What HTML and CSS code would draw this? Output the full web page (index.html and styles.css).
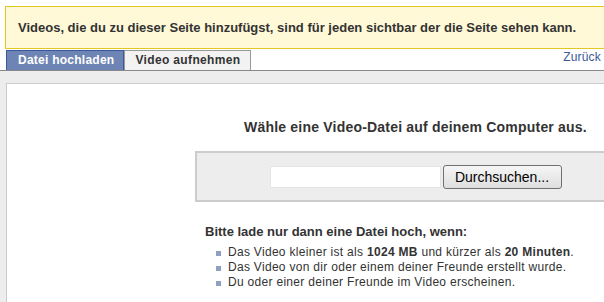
FILE: index.html
```html
<!DOCTYPE html>
<html lang="de">
<head>
  <meta charset="UTF-8" />
  <title>Video hinzufügen</title>
  <link rel="stylesheet" href="styles.css">
</head>
<body>
  <div class="notice">
    Videos, die du zu dieser Seite hinzufügst, sind für jeden sichtbar der die Seite sehen kann.
  </div>

  <div class="tabbar">
    <a class="tab active" href="#">Datei hochladen</a>
    <a class="tab" href="#">Video aufnehmen</a>
    <a class="back" href="#">Zurück</a>
  </div>

  <div class="panel">
    <div class="content">
      <div class="column">
        <h2>Wähle eine Video-Datei auf deinem Computer aus.</h2>

        <div class="upload">
          <input type="text" class="filename" />
          <button class="browse">Durchsuchen...</button>
        </div>

        <div class="rules">
          <h3>Bitte lade nur dann eine Datei hoch, wenn:</h3>
          <ul>
            <li>Das Video kleiner ist als <b>1024 MB</b> und kürzer als <b>20 Minuten</b>.</li>
            <li>Das Video von dir oder einem deiner Freunde erstellt wurde.</li>
            <li>Du oder einer deiner Freunde im Video erscheinen.</li>
          </ul>
        </div>
      </div>
    </div>
  </div>
</body>
</html>
```

FILE: styles.css
```css
* {
  margin: 0;
  padding: 0;
  box-sizing: border-box;
}

html, body {
  overflow: hidden;
  height: 100%;
}

body {
  background: #fff;
  color: #333;
  font-family: 'Liberation Sans', Arial, sans-serif;
  font-size: 12px;
  padding-top: 6px;
}

.notice {
  margin-left: 5px;
  height: 43px;
  padding: 0 12px;
  display: flex;
  align-items: center;
  background: #fff9d7;
  border: 1px solid #e2c822;
  border-right: none;
  font-weight: bold;
  font-size: 13px;
  color: #333;
  white-space: nowrap;
}

.tabbar {
  display: flex;
  align-items: flex-end;
  width: 595px;
  margin-left: 6px;
  height: 21px;
  padding-top: 1px;
}

.tab {
  display: block;
  height: 20px;
  line-height: 18px;
  padding: 0 10px;
  font-weight: bold;
  font-size: 12px;
  letter-spacing: 0.35px;
  text-decoration: none;
  color: #333;
  background: #f2f2f2;
  border: 1px solid #999;
  border-bottom: none;
}

.tab.active {
  background: #6d84b4;
  border-color: #3b5998;
  color: #fff;
  letter-spacing: 0.25px;
  padding: 0 9px 0 11px;
}

.back {
  margin-left: auto;
  align-self: flex-start;
  color: #3b5998;
  text-decoration: none;
  font-size: 12px;
  letter-spacing: 0.2px;
  line-height: 12px;
  margin-top: 1px;
}

.panel {
  border-top: 1px solid #898989;
  background: #ededed;
  padding: 12px 0 0 6px;
  height: 240px;
}

.content {
  background: #fff;
  border: 1px solid #ccc;
  border-right: none;
  border-bottom: none;
  height: 100%;
  overflow: hidden;
  padding: 35px 0 0 188px;
}

.column {
  width: 441px;
}

h2 {
  font-size: 14px;
  letter-spacing: 0.2px;
  font-weight: bold;
  line-height: 16px;
  text-align: center;
  color: #333;
  margin-bottom: 16px;
  white-space: nowrap;
}

.upload {
  background: #ededed;
  border: 2px solid #ccc;
  height: 51px;
  display: flex;
  align-items: center;
  justify-content: center;
  gap: 2px;
}

.filename {
  width: 171px;
  height: 22px;
  border: 1px solid #e4e4e4;
  background: #fff;
  margin-top: 1px;
}

.browse {
  width: 119px;
  height: 24px;
  font-family: 'Liberation Sans', Arial, sans-serif;
  font-size: 14px;
  color: #000;
  background: linear-gradient(#f6f6f6, #dedede);
  border: 1px solid #707070;
  border-radius: 3px;
}

.rules {
  padding: 22px 0 0 10px;
}

h3 {
  font-size: 13px;
  font-weight: bold;
  line-height: 15px;
  color: #333;
  margin-bottom: 6px;
}

ul {
  list-style: none;
  padding-left: 11px;
}

li {
  position: relative;
  line-height: 15px;
  padding-left: 12px;
  letter-spacing: 0.3px;
  color: #333;
}

li::before {
  content: '';
  position: absolute;
  left: 0;
  top: 6px;
  width: 5px;
  height: 5px;
  background: #8fa0c3;
}

li b {
  font-weight: bold;
}
```
